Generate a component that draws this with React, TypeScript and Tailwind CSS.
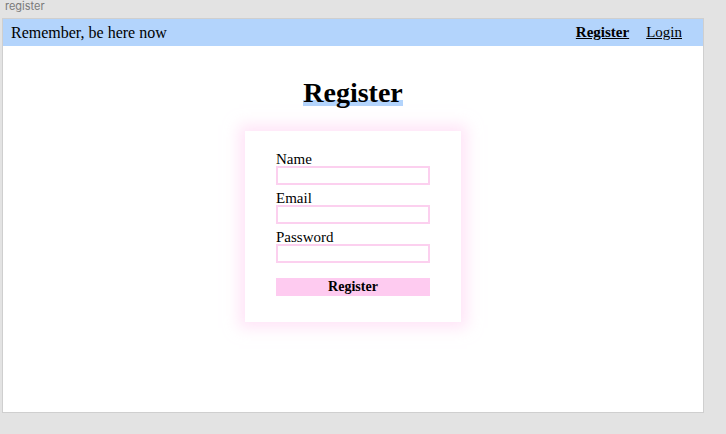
export default function App() {
  return (
    <div className="w-[726px] h-[434px] bg-[#e3e3e3] flex flex-col overflow-hidden">
      <div className="h-[18px] pl-[5px] text-[11px] leading-[12px] text-[#7a7a7a] font-['Inter',sans-serif]">register</div>
      <div className="ml-[2px] w-[702px] h-[395px] border border-[#cfcfcf] bg-white flex flex-col font-['Liberation_Serif',serif] text-black">
        <nav className="h-[27px] bg-[#b3d4fc] flex items-center justify-between pl-[8px] pr-[21px]">
          <span className="text-[16px]">Remember, be here now</span>
          <div className="flex gap-[17px] text-[15px]">
            <a className="font-bold underline">Register</a>
            <a className="underline">Login</a>
          </div>
        </nav>
        <div className="flex flex-col items-center">
          <h1 className="mt-[30px] text-[28px] leading-[34px] font-bold bg-[linear-gradient(transparent_72%,#b3d4fc_72%,#b3d4fc_88%,transparent_88%)]">Register</h1>
          <form className="mt-[21px] w-[216px] h-[191px] bg-white shadow-[0_0_14px_6px_rgba(255,205,240,0.55)] pt-[22px] pl-[31px] flex flex-col">
            <label className="text-[15px] leading-[13px]">Name</label>
            <input autoFocus className="w-[154px] h-[19px] border-2 border-[#fcd0ef] outline-none px-[2px] text-[13px]" />
            <label className="mt-[6px] text-[15px] leading-[14px]">Email</label>
            <input className="w-[154px] h-[19px] border-2 border-[#fcd0ef] outline-none" />
            <label className="mt-[6px] text-[15px] leading-[14px]">Password</label>
            <input type="password" className="w-[154px] h-[19px] border-2 border-[#fcd0ef] outline-none" />
            <button type="button" className="mt-[15px] w-[154px] h-[18px] bg-[#fecbf0] text-[14px] leading-[18px] font-bold">Register</button>
          </form>
        </div>
      </div>
    </div>
  );
}
